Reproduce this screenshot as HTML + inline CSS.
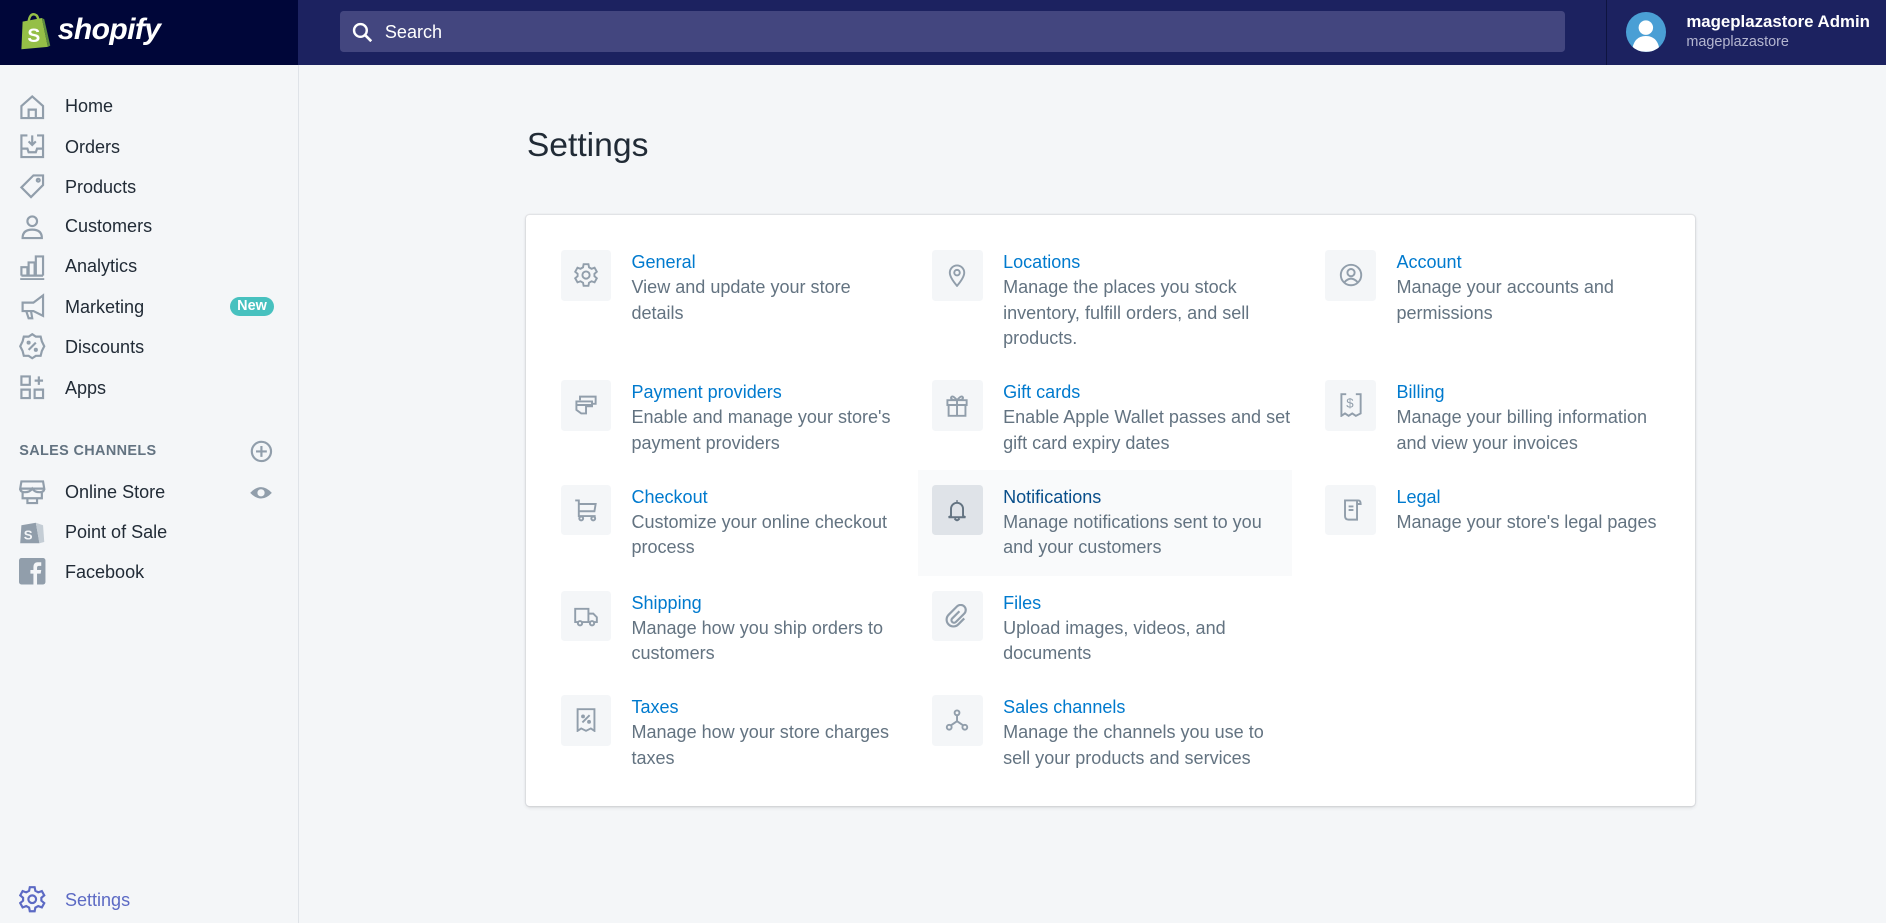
<!DOCTYPE html>
<html><head><meta charset="utf-8">
<style>
*{box-sizing:border-box;margin:0;padding:0}
html,body{width:1886px;height:923px;overflow:hidden;background:#f4f6f8}
#w{zoom:1.2028;width:1568px;height:767px;position:relative;font-family:"Liberation Sans",sans-serif;color:#212b36}
.top{position:absolute;left:0;top:0;width:1568px;height:54px;background:#1c2260}
.logo{position:absolute;left:0;top:0;width:248px;height:54px;background:#000639}
.logo span{position:absolute;left:48px;top:11px;color:#fff;font-weight:bold;font-style:italic;font-size:25px;letter-spacing:-0.5px}
.search{position:absolute;left:283px;top:9px;width:1018px;height:34px;background:#43467f;border-radius:3px;color:#fff;font-size:15px;padding:9px 0 0 37px}
.div{position:absolute;left:1335px;top:0;width:1px;height:54px;background:#0e1440}
.av{position:absolute;left:1352px;top:10px;width:33px;height:33px;border-radius:50%;background:#4a9fd5;overflow:hidden}
.uname{position:absolute;left:1402px;top:10px;color:#fff;font-size:14px;font-weight:bold}
.usub{position:absolute;left:1402px;top:28px;color:#b4b6d0;font-size:12px}
.side{position:absolute;left:0;top:54px;width:249px;height:713px;background:#f4f6f8;border-right:1px solid #dfe3e8}
.nav{position:absolute;left:54px;font-size:15px;color:#212b36}
.ic{position:absolute;left:16px;width:22px;height:22px}
.sc{position:absolute;left:16px;top:314px;font-size:12px;font-weight:bold;color:#637381;letter-spacing:.3px}
.new{position:absolute;left:191px;top:193px;width:37px;height:16px;border-radius:8px;background:#47c1bf;color:#fff;font-size:12px;font-weight:bold;text-align:center;line-height:16px}
h1{position:absolute;left:438px;top:106px;font-size:28px;font-weight:normal;color:#212b36}
.card{position:absolute;left:437px;top:179px;width:972px;height:491px;background:#fff;border-radius:3px;box-shadow:0 0 0 1px rgba(63,63,68,.07),0 1px 3px rgba(63,63,68,.15)}
.it{position:absolute}
.ib{position:absolute;left:0;top:0;width:42px;height:42px;background:#f4f6f8;border-radius:3px}
.ib svg{position:absolute;left:11px;top:11px}
.tx{position:absolute;left:59px;top:0;width:270px;font-size:15px;line-height:21px;color:#637381;white-space:nowrap}
.tx b{display:block;font-weight:normal;color:#007ace}
.hl{position:absolute;left:763px;top:391px;width:311px;height:88px;background:#f9fafb}
</style></head><body><div id="w">
<div class="top">
<div class="logo">
<svg style="position:absolute;left:16px;top:10px" width="26" height="32" viewBox="0 0 26 32"><path d="M3 8 L19 5 L24 29 L2 31 Z" fill="#95bf47"/><path d="M19 5 L24 29 L26 28 L21 6Z" fill="#5e8e3e"/><path d="M8 8 Q9 1 13 2 Q16 3 16 7" fill="none" stroke="#95bf47" stroke-width="2"/><text x="7" y="25" fill="#fff" font-family="Liberation Sans" font-weight="bold" font-size="16">S</text></svg>
<span>shopify</span></div>
<div class="search"><svg style="position:absolute;left:10px;top:9px" width="17" height="17" viewBox="0 0 17 17"><circle cx="7" cy="7" r="5.3" fill="none" stroke="#fff" stroke-width="2"/><path d="M11 11 L16 16" stroke="#fff" stroke-width="2.2"/></svg>Search</div>
<div class="div"></div>
<div class="av"><svg width="33" height="33" viewBox="0 0 33 33"><circle cx="16.5" cy="13" r="6" fill="#fff"/><path d="M5 33 Q6 20 16.5 20 Q27 20 28 33Z" fill="#fff"/></svg></div>
<div class="uname">mageplazastore Admin</div>
<div class="usub">mageplazastore</div>
</div>
<div class="side">
<svg class="ic" style="top:24px" viewBox="0 0 22 22" fill="none" stroke="#919eab" stroke-width="1.8"><path d="M2 10 L11 2 L20 10 V20 H2Z M8 20 V13 H14 V20"/></svg><div class="nav" style="top:26px">Home</div>
<svg class="ic" style="top:57px" viewBox="0 0 22 22" fill="none" stroke="#919eab" stroke-width="1.8"><path d="M7 2 H2 V20 H20 V2 H15 M2 13 H7 L8 16 H14 L15 13 H20 M11 2 V10 M8 7 L11 10 L14 7"/></svg><div class="nav" style="top:60px">Orders</div>
<svg class="ic" style="top:90px" viewBox="0 0 22 22" fill="none" stroke="#919eab" stroke-width="1.8"><path d="M12 2 H20 V10 L10 20 L2 12Z"/><circle cx="16" cy="6" r="1.2"/></svg><div class="nav" style="top:93px">Products</div>
<svg class="ic" style="top:124px" viewBox="0 0 22 22" fill="none" stroke="#919eab" stroke-width="1.8"><circle cx="11" cy="6" r="4"/><path d="M3 20 Q3 13 11 13 Q19 13 19 20Z"/></svg><div class="nav" style="top:126px">Customers</div>
<svg class="ic" style="top:157px" viewBox="0 0 22 22" fill="none" stroke="#919eab" stroke-width="1.8"><path d="M1 21 H21 M2 18 V11 H7 V18 M8 18 V7 H13 V18 M14 18 V2 H20 V18 M2 18 H20"/></svg><div class="nav" style="top:159px">Analytics</div>
<svg class="ic" style="top:190px" viewBox="0 0 22 22" fill="none" stroke="#919eab" stroke-width="1.8"><path d="M20 2 V19 L12 15 H3 V8 H12Z M6 15 L8 21 H11 L10 15"/></svg><div class="nav" style="top:193px">Marketing</div><div class="new">New</div>
<svg class="ic" style="top:223px" viewBox="0 0 22 22" fill="none" stroke="#919eab" stroke-width="1.8"><path d="M11 1 L14 3 L18 3 L19 7 L21 11 L19 15 L18 19 L14 19 L11 21 L8 19 L4 19 L3 15 L1 11 L3 7 L4 3 L8 3Z M8 14 L14 8"/><circle cx="8" cy="8" r=".8"/><circle cx="14" cy="14" r=".8"/></svg><div class="nav" style="top:226px">Discounts</div>
<svg class="ic" style="top:257px" viewBox="0 0 22 22" fill="none" stroke="#919eab" stroke-width="1.8"><path d="M2 2 H9 V9 H2Z M2 13 H9 V20 H2Z M13 13 H20 V20 H13Z M16.5 2 V9 M13 5.5 H20"/></svg><div class="nav" style="top:260px">Apps</div>
<div class="sc">SALES CHANNELS</div>
<svg style="position:absolute;left:208px;top:312px" width="19" height="19" viewBox="0 0 19 19" fill="none" stroke="#919eab" stroke-width="1.8"><circle cx="9.5" cy="9.5" r="8"/><path d="M9.5 5 V14 M5 9.5 H14"/></svg>
<svg class="ic" style="top:344px" viewBox="0 0 22 22" fill="none" stroke="#919eab" stroke-width="1.8"><path d="M2 2 H20 L21 8 H1Z M1 8 Q1 11 5 11 Q9 11 11 8 Q13 11 17 11 Q21 11 21 8 M3 11 V16 H19 V11 M7 16 V20 H15 V16"/></svg><div class="nav" style="top:347px">Online Store</div>
<svg style="position:absolute;left:207px;top:349px" width="20" height="13" viewBox="0 0 20 13"><path d="M1 6.5 Q10 -3 19 6.5 Q10 16 1 6.5Z" fill="#919eab"/><circle cx="10" cy="6.5" r="3" fill="#f4f6f8"/></svg>
<svg class="ic" style="top:377px" viewBox="0 0 22 22"><path d="M2 6 L14 4 L17 21 L1 21Z" fill="#919eab"/><path d="M14 4 L20 6 L21 20 L17 21Z" fill="#c4cdd5"/><text x="4" y="18" fill="#f4f6f8" font-family="Liberation Sans" font-weight="bold" font-size="11">S</text></svg><div class="nav" style="top:380px">Point of Sale</div>
<svg class="ic" style="top:410px" viewBox="0 0 22 22"><rect width="22" height="22" rx="2" fill="#919eab"/><path d="M15 22 V13 H18 L18.5 10 H15 V8 Q15 6.5 16.5 6.5 H18.5 V3.5 H15.5 Q12 3.5 12 7.5 V10 H9.5 V13 H12 V22Z" fill="#f4f6f8"/></svg><div class="nav" style="top:413px">Facebook</div>
<svg class="ic" style="top:683px" viewBox="0 0 22 22" fill="none" stroke="#5c6ac4" stroke-width="1.8"><path d="M9 1 H13 L13.6 4 L16 5.3 L19 4.2 L21 7.8 L18.6 9.8 V12.2 L21 14.2 L19 17.8 L16 16.7 L13.6 18 L13 21 H9 L8.4 18 L6 16.7 L3 17.8 L1 14.2 L3.4 12.2 V9.8 L1 7.8 L3 4.2 L6 5.3 L8.4 4Z"/><circle cx="11" cy="11" r="3.2"/></svg><div class="nav" style="top:686px;color:#5c6ac4">Settings</div>
</div>
<h1>Settings</h1>
<div class="card"></div>
<div class="hl"></div>

<div class="it" style="left:466px;top:208px"><div class="ib"><svg width="20" height="20" viewBox="0 0 20 20" fill="none" stroke="#919eab" stroke-width="1.6"><path d="M8 1 H12 L12.5 3.6 L14.6 4.8 L17.1 3.9 L19 7.3 L17 9 V11 L19 12.7 L17.1 16.1 L14.6 15.2 L12.5 16.4 L12 19 H8 L7.5 16.4 L5.4 15.2 L2.9 16.1 L1 12.7 L3 11 V9 L1 7.3 L2.9 3.9 L5.4 4.8 L7.5 3.6Z"/><circle cx="10" cy="10" r="3"/></svg></div><div class="tx"><b>General</b>View and update your store<br>details</div></div>
<div class="it" style="left:775px;top:208px"><div class="ib"><svg width="20" height="20" viewBox="0 0 20 20" fill="none" stroke="#919eab" stroke-width="1.6"><path d="M10 19 Q4 12 4 8 A6 6 0 0 1 16 8 Q16 12 10 19Z"/><circle cx="10" cy="8" r="2.3"/></svg></div><div class="tx"><b>Locations</b>Manage the places you stock<br>inventory, fulfill orders, and sell<br>products.</div></div>
<div class="it" style="left:1102px;top:208px"><div class="ib"><svg width="20" height="20" viewBox="0 0 20 20" fill="none" stroke="#919eab" stroke-width="1.6"><circle cx="10" cy="10" r="8.5"/><circle cx="10" cy="8" r="3"/><path d="M4.5 16 Q10 10 15.5 16"/></svg></div><div class="tx"><b>Account</b>Manage your accounts and<br>permissions</div></div>

<div class="it" style="left:466px;top:316px"><div class="ib"><svg width="20" height="20" viewBox="0 0 20 20" fill="none" stroke="#919eab" stroke-width="1.6"><path d="M5 6 V3 H18 V9 H15 M2 7 H15 V11 H10 V17 H6 L2 14Z M2 10 H15"/></svg></div><div class="tx"><b>Payment providers</b>Enable and manage your store's<br>payment providers</div></div>
<div class="it" style="left:775px;top:316px"><div class="ib"><svg width="20" height="20" viewBox="0 0 20 20" fill="none" stroke="#919eab" stroke-width="1.6"><path d="M2 6 H18 V10 H2Z M3 10 V19 H17 V10 M10 6 V19 M10 6 Q6 1 5 4 Q5 6 10 6 Q15 6 15 4 Q14 1 10 6"/></svg></div><div class="tx"><b>Gift cards</b>Enable Apple Wallet passes and set<br>gift card expiry dates</div></div>
<div class="it" style="left:1102px;top:316px"><div class="ib"><svg width="20" height="20" viewBox="0 0 20 20" fill="none" stroke="#919eab" stroke-width="1.6"><path d="M6 1 H2 V19 L5 17 L8 19 L11 17 L14 19 L18 17 V1 H14"/><text x="6" y="12" font-family="Liberation Sans" font-size="11" fill="#919eab" stroke="none">$</text></svg></div><div class="tx"><b>Billing</b>Manage your billing information<br>and view your invoices</div></div>

<div class="it" style="left:466px;top:403px"><div class="ib"><svg width="20" height="20" viewBox="0 0 20 20" fill="none" stroke="#919eab" stroke-width="1.6"><path d="M1 2 H4 V15 H18 M4 5 H18 L17 11 H4"/><circle cx="6" cy="17" r="1.6"/><circle cx="16" cy="17" r="1.6"/></svg></div><div class="tx"><b>Checkout</b>Customize your online checkout<br>process</div></div>
<div class="it" style="left:775px;top:403px"><div class="ib" style="background:#dfe3e8"><svg width="20" height="20" viewBox="0 0 20 20" fill="none" stroke="#637381" stroke-width="1.6"><path d="M10 2 V3 M5 15 V9 A5 5 0 0 1 15 9 V15 L17 16 H3Z M8 17 Q10 20 12 17"/></svg></div><div class="tx"><b style="color:#084e8a">Notifications</b>Manage notifications sent to you<br>and your customers</div></div>
<div class="it" style="left:1102px;top:403px"><div class="ib"><svg width="20" height="20" viewBox="0 0 20 20" fill="none" stroke="#919eab" stroke-width="1.6"><path d="M5 2 H16 Q18 2 18 5 H15 V18 H8 Q5 18 5 15Z M15 5 V2 M8 7 H12 M8 10 H12"/></svg></div><div class="tx"><b>Legal</b>Manage your store's legal pages</div></div>

<div class="it" style="left:466px;top:491px"><div class="ib"><svg width="20" height="20" viewBox="0 0 20 20" fill="none" stroke="#919eab" stroke-width="1.6"><path d="M1 4 H12 V15 H1Z M12 8 H16 L19 11 V15 H12"/><circle cx="5" cy="16" r="1.8" fill="#f4f6f8"/><circle cx="15" cy="16" r="1.8" fill="#f4f6f8"/></svg></div><div class="tx"><b>Shipping</b>Manage how you ship orders to<br>customers</div></div>
<div class="it" style="left:775px;top:491px"><div class="ib"><svg width="20" height="20" viewBox="0 0 20 20" fill="none" stroke="#919eab" stroke-width="1.8"><path d="M12 6 L6 12 A2 2 0 0 0 9 15 L16 8 A4 4 0 0 0 10 2 L3 9 A5 5 0 0 0 11 17 L16 12"/></svg></div><div class="tx"><b>Files</b>Upload images, videos, and<br>documents</div></div>

<div class="it" style="left:466px;top:578px"><div class="ib"><svg width="20" height="20" viewBox="0 0 20 20" fill="none" stroke="#919eab" stroke-width="1.6"><path d="M3 1 H17 V19 L14 17 L10 19 L6 17 L3 19Z M7 12 L13 6"/><circle cx="7.5" cy="7" r=".8"/><circle cx="12.5" cy="11.5" r=".8"/></svg></div><div class="tx"><b>Taxes</b>Manage how your store charges<br>taxes</div></div>
<div class="it" style="left:775px;top:578px"><div class="ib"><svg width="20" height="20" viewBox="0 0 20 20" fill="none" stroke="#919eab" stroke-width="1.6"><circle cx="10" cy="4" r="2"/><circle cx="3.5" cy="16" r="2"/><circle cx="16.5" cy="16" r="2"/><path d="M10 6 V11 L4.8 14.5 M10 11 L15.2 14.5"/></svg></div><div class="tx"><b>Sales channels</b>Manage the channels you use to<br>sell your products and services</div></div>
</div></body></html>
